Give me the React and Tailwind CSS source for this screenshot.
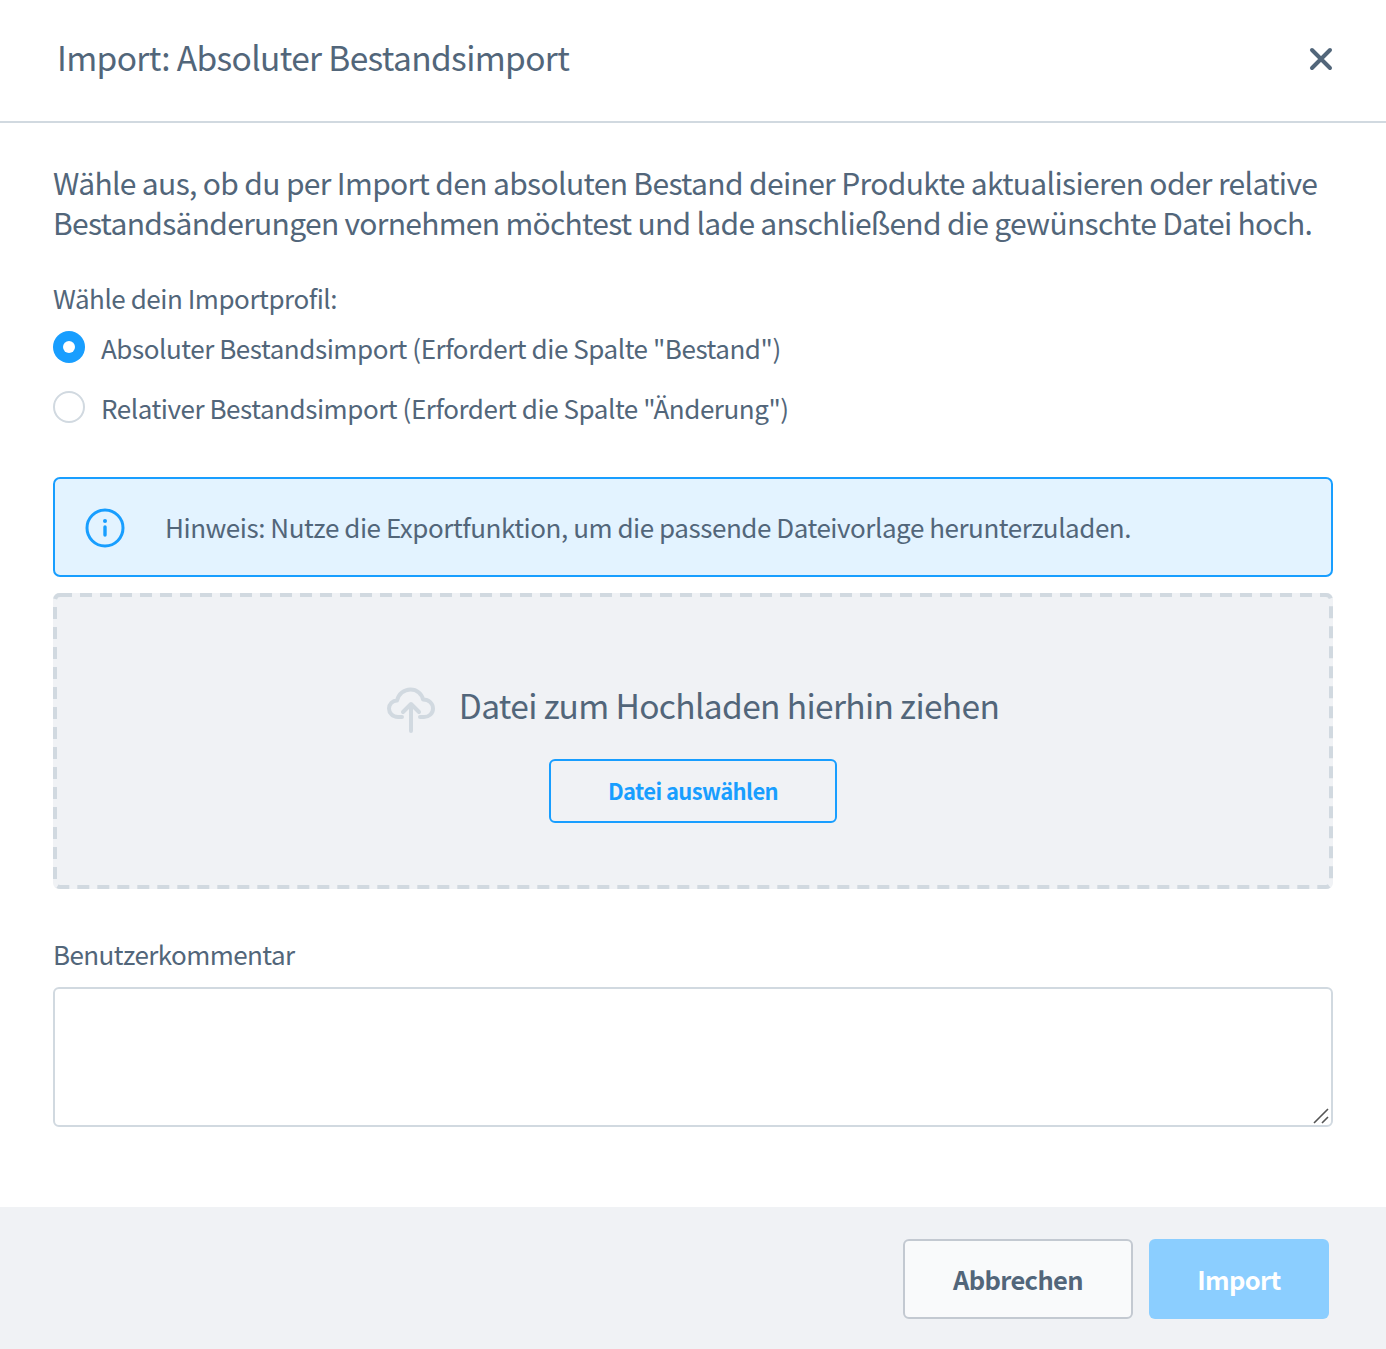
import React from "react";

export default function App() {
  return (
    <div className="w-[1386px] h-[1349px] bg-white flex flex-col text-[#52667a] font-['Noto_Sans_CJK_SC','Source_Sans_Pro',sans-serif] overflow-hidden">
      <header className="h-[123px] shrink-0 border-b-2 border-[#d1d9e0] flex items-center justify-between pl-[57px] pr-[53px] pb-[4px]">
        <h1 className="-mt-[4px] text-[33.5px] leading-[44px] font-normal tracking-[-0.65px]">Import: Absoluter Bestandsimport</h1>
        <svg width="24" height="24" viewBox="0 0 24 24" className="text-[#52667a]">
          <path d="M3 3 L21 21 M21 3 L3 21" stroke="currentColor" strokeWidth="4" strokeLinecap="round" />
        </svg>
      </header>

      <main className="flex-1 px-[53px] pt-[39px]">
        <p className="text-[30px] leading-[40px] tracking-[-0.65px] whitespace-nowrap">
          Wähle aus, ob du per Import den absoluten Bestand deiner Produkte aktualisieren oder relative<br />
          <span className="tracking-[-0.7px]">Bestandsänderungen vornehmen möchtest und lade anschließend die gewünschte Datei hoch.</span>
        </p>

        <div className="mt-[36px] text-[26px] leading-[40px] tracking-[-0.46px]">Wähle dein Importprofil:</div>

        <div className="mt-[10px] flex flex-col gap-[20px]">
          <label className="flex items-center h-[40px]">
            <span className="w-[32px] h-[32px] rounded-full bg-[#189eff] flex items-center justify-center -mt-[2px]">
              <span className="w-[12px] h-[12px] rounded-full bg-white" />
            </span>
            <span className="ml-[16px] text-[26px] leading-[40px] tracking-[-0.45px]">Absoluter Bestandsimport (Erfordert die Spalte "Bestand")</span>
          </label>
          <label className="flex items-center h-[40px]">
            <span className="w-[32px] h-[32px] rounded-full bg-white border-2 border-[#d1d9e0] -mt-[2px]" />
            <span className="ml-[16px] text-[26px] leading-[40px] tracking-[-0.45px]">Relativer Bestandsimport (Erfordert die Spalte "Änderung")</span>
          </label>
        </div>

        <div className="mt-[49px] h-[100px] rounded-[7px] border-2 border-[#189eff] bg-[#e3f3ff] flex items-center pl-[30px]">
          <svg width="40" height="40" viewBox="0 0 40 40" className="shrink-0 mt-[2px]">
            <circle cx="20" cy="20" r="18" fill="none" stroke="#189eff" strokeWidth="3" />
            <circle cx="20" cy="13" r="2" fill="#189eff" />
            <path d="M20 19 V27" stroke="#189eff" strokeWidth="3.4" strokeLinecap="round" />
          </svg>
          <span className="ml-[40px] text-[26px] leading-[40px] tracking-[-0.46px]">Hinweis: Nutze die Exportfunktion, um die passende Dateivorlage herunterzuladen.</span>
        </div>

        <div className="relative mt-[16px] h-[296px] rounded-[6px] bg-[#f0f2f5] flex flex-col items-center pt-[90px]">
          <svg className="absolute inset-0" width="1280" height="296" fill="none">
            <rect x="2" y="2" width="1276" height="292" rx="5" stroke="#d1d9e0" strokeWidth="4" strokeDasharray="12 8" />
          </svg>
          <div className="relative flex items-center h-[48px]">
            <svg width="48" height="46" viewBox="0 0 48 46" fill="none" stroke="#d1d9e0" strokeWidth="4" strokeLinecap="round" strokeLinejoin="round" className="mt-[5px]">
              <path d="M15 30 H11 C5.5 30 2 26 2 21.5 C2 17 5.5 13.5 10 13.5 C11.5 7 17 2.5 23.5 2.5 C30 2.5 35 7 36 12.5 C42 12.5 46 16.5 46 21.5 C46 26.5 42 30 37 30 H33" />
              <path d="M24 44 V18 M16 25 L24 17 L32 25" />
            </svg>
            <span className="ml-[24px] -mt-[4px] text-[33.5px] leading-[48px] tracking-[-0.65px]">Datei zum Hochladen hierhin ziehen</span>
          </div>
          <button className="relative mt-[28px] w-[288px] h-[64px] rounded-[6px] border-2 border-[#189eff] text-[#189eff] text-[22px] tracking-[-0.6px] font-semibold flex items-center justify-center pb-[2px]">
            Datei auswählen
          </button>
        </div>

        <div className="mt-[45px] text-[26px] leading-[40px] tracking-[-0.58px]">Benutzerkommentar</div>
        <div className="relative mt-[13px] h-[140px]">
          <textarea className="block w-[1280px] h-[140px] rounded-[6px] border-2 border-[#d1d9e0] bg-white outline-none resize-none" />
          <svg className="absolute right-[4px] bottom-[3px]" width="16" height="16" viewBox="0 0 16 16" fill="none" stroke="#555" strokeWidth="1.6">
            <path d="M1 15 L15 1 M9 15 L15 9" />
          </svg>
        </div>
      </main>

      <footer className="h-[142px] shrink-0 bg-[#f0f2f5] flex items-start justify-end pt-[32px] pr-[57px] gap-[16px]">
        <button className="w-[230px] h-[80px] rounded-[6px] border-2 border-[#c3c9d1] bg-[#f9fafb] text-[25.5px] tracking-[-0.65px] font-semibold text-[#52667a] flex items-center justify-center">Abbrechen</button>
        <button className="w-[180px] h-[80px] rounded-[6px] bg-[#8bceff] text-[25.5px] tracking-[-0.65px] font-semibold text-white flex items-center justify-center">Import</button>
      </footer>
    </div>
  );
}
